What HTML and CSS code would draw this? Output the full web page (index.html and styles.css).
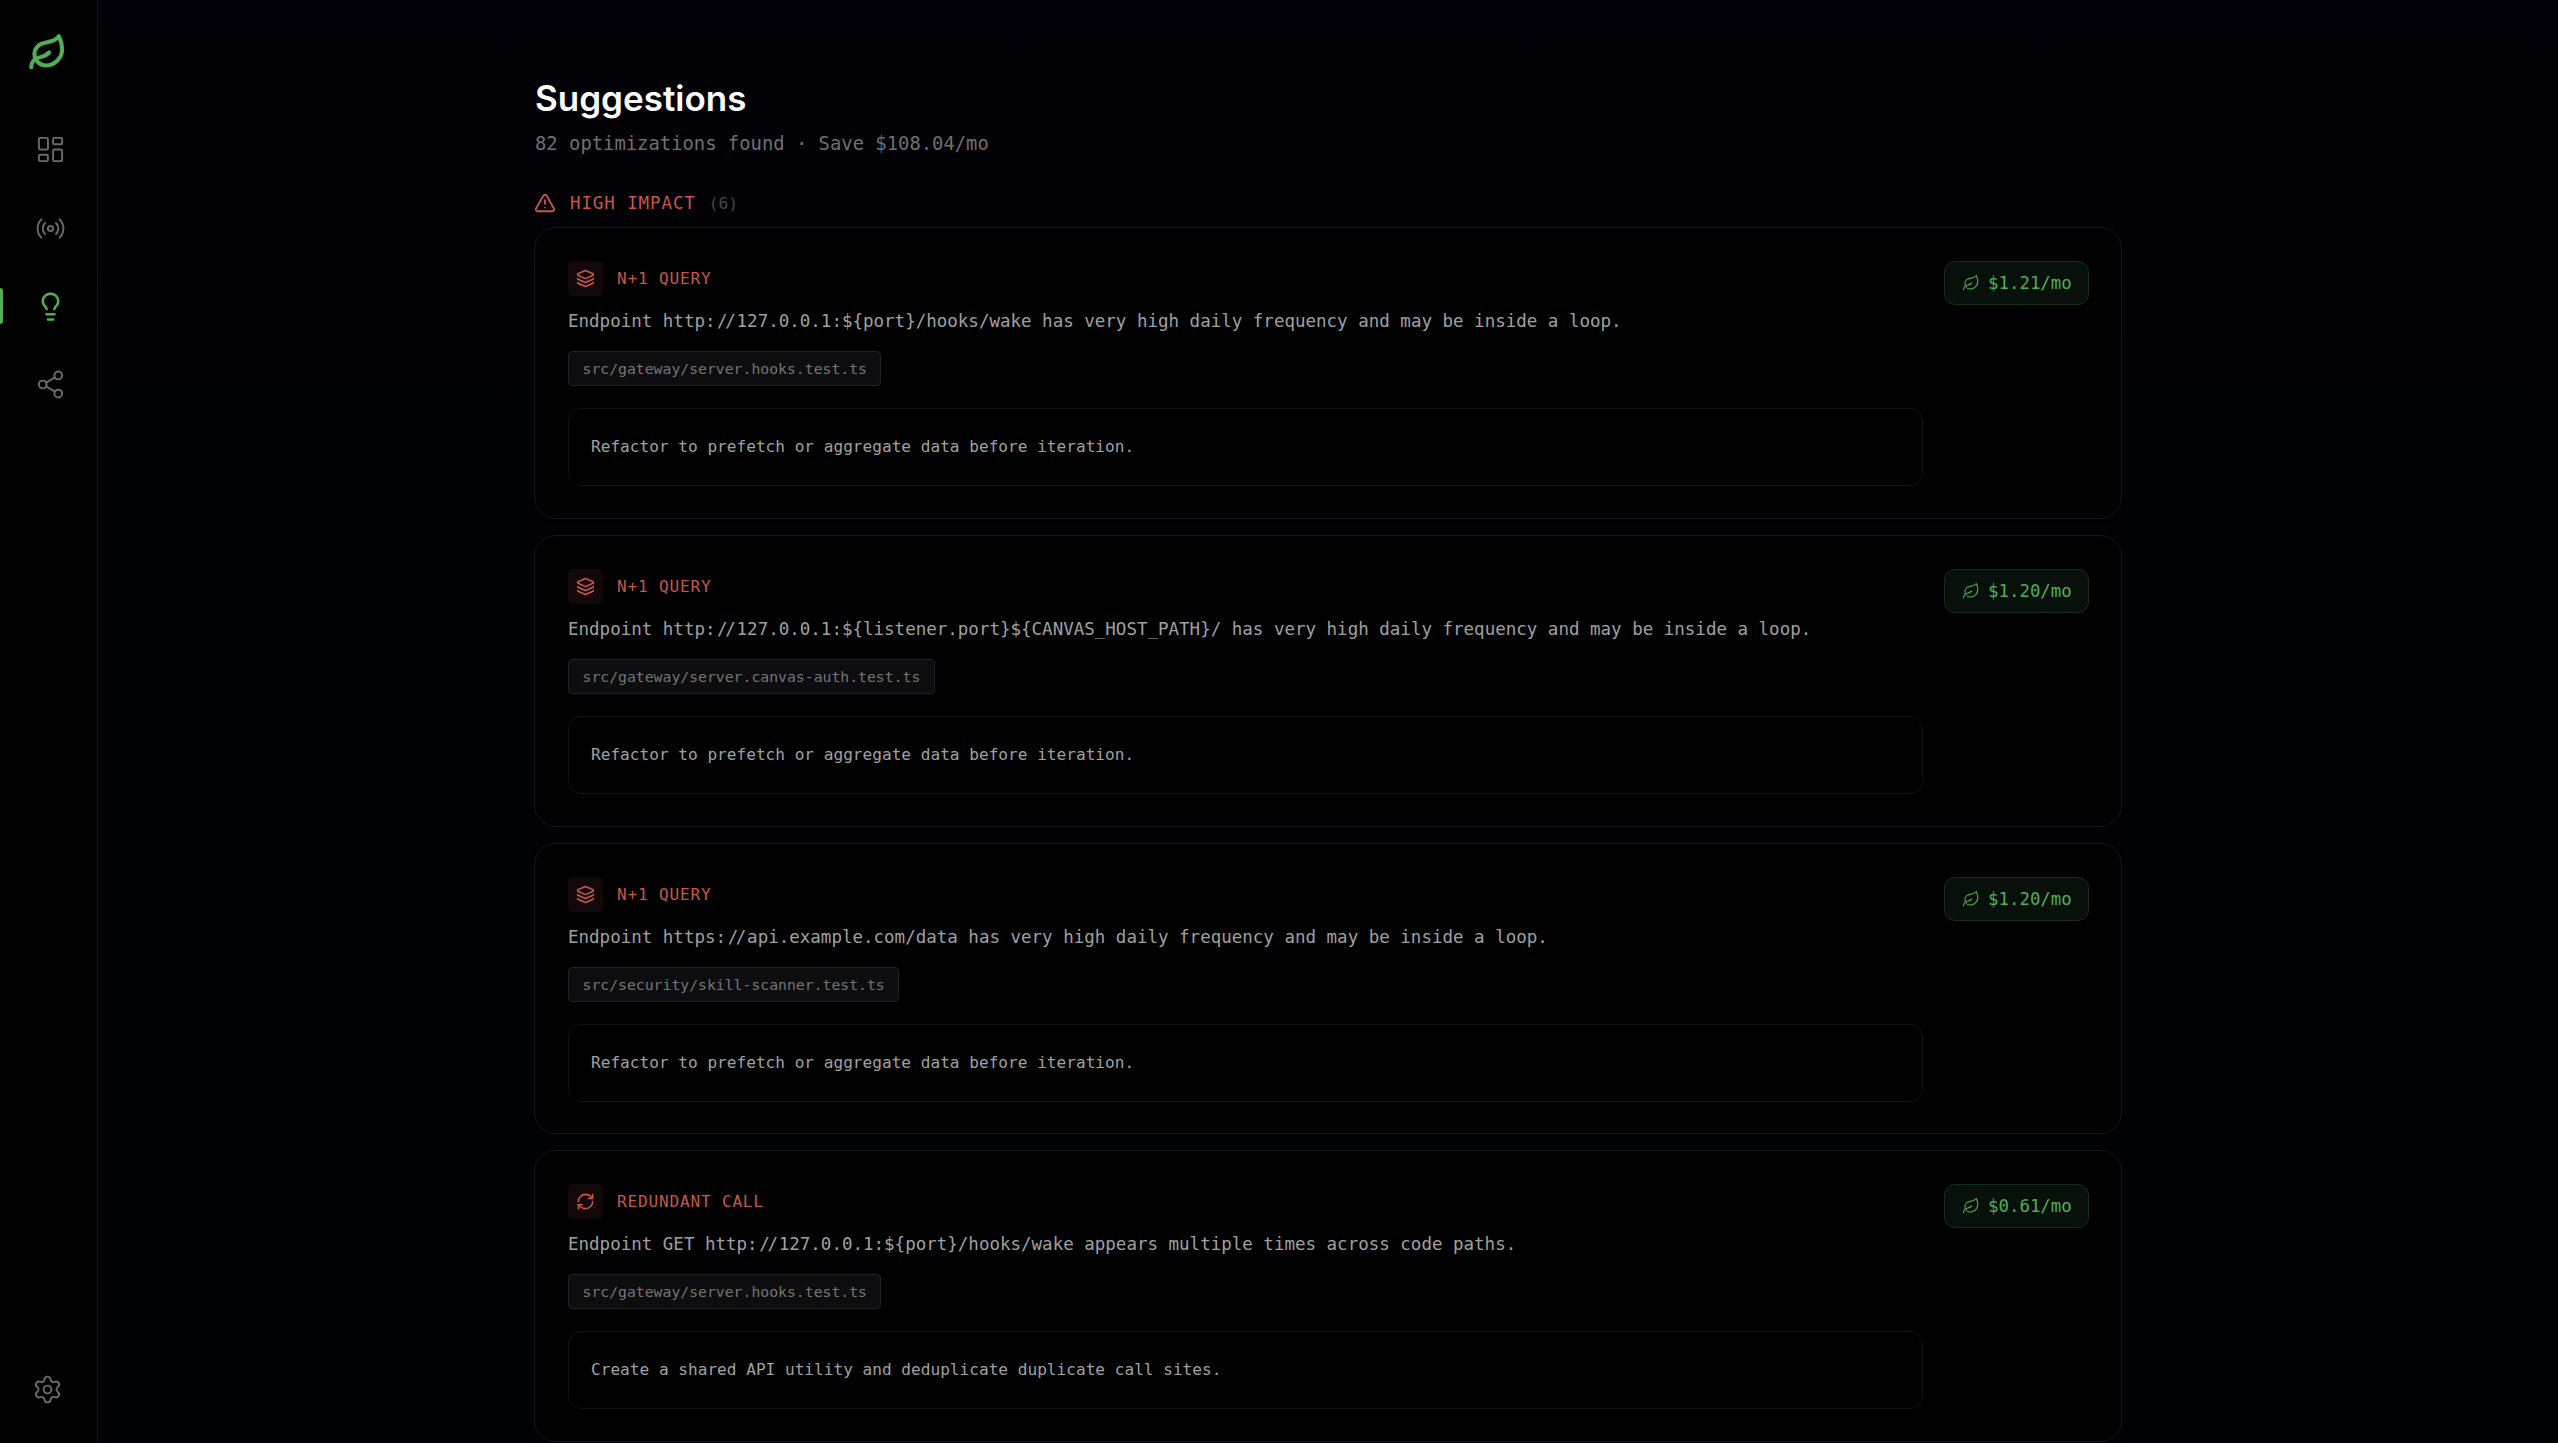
FILE: index.html
```html
<!DOCTYPE html>
<html lang="en">
<head>
<meta charset="utf-8">
<title>Suggestions</title>
<link rel="stylesheet" href="styles.css">
</head>
<body>
<svg class="sprite" aria-hidden="true">
  <symbol id="leaf" viewBox="0 0 24 24"><path d="M11 20A7 7 0 0 1 9.8 6.1C15.5 5 17 4.48 19 2c1 2 2 4.18 2 8 0 5.5-4.78 10-10 10Z"/><path d="M2 21c0-3 1.85-5.36 5.08-6C9.5 14.52 12 13 13 12"/></symbol>
  <symbol id="layers" viewBox="0 0 24 24"><path d="M12.83 2.18a2 2 0 0 0-1.66 0L2.6 6.08a1 1 0 0 0 0 1.83l8.58 3.91a2 2 0 0 0 1.66 0l8.58-3.9a1 1 0 0 0 0-1.83z"/><path d="M2 12a1 1 0 0 0 .58.91l8.6 3.91a2 2 0 0 0 1.65 0l8.58-3.9A1 1 0 0 0 22 12"/><path d="M2 17a1 1 0 0 0 .58.91l8.6 3.91a2 2 0 0 0 1.65 0l8.58-3.9A1 1 0 0 0 22 17"/></symbol>
  <symbol id="refresh" viewBox="0 0 24 24"><path d="M3 12a9 9 0 0 1 9-9 9.75 9.75 0 0 1 6.74 2.74L21 8"/><path d="M21 3v5h-5"/><path d="M21 12a9 9 0 0 1-9 9 9.75 9.75 0 0 1-6.74-2.74L3 16"/><path d="M8 16H3v5"/></symbol>
</svg>
<div class="app">
  <aside class="sidebar">
    <svg class="icon logo"><use href="#leaf"/></svg>
    <nav class="nav">
      <a class="nav-item"><svg class="icon nav-icon" viewBox="0 0 24 24"><rect x="3" y="3" width="7" height="9" rx="1"/><rect x="14" y="3" width="7" height="5" rx="1"/><rect x="14" y="12" width="7" height="9" rx="1"/><rect x="3" y="16" width="7" height="5" rx="1"/></svg></a>
      <a class="nav-item"><svg class="icon nav-icon" viewBox="0 0 24 24"><path d="M16.247 7.761a6 6 0 0 1 0 8.478"/><path d="M19.075 4.933a10 10 0 0 1 0 14.134"/><path d="M4.925 19.067a10 10 0 0 1 0-14.134"/><path d="M7.753 16.239a6 6 0 0 1 0-8.478"/><circle cx="12" cy="12" r="2"/></svg></a>
      <a class="nav-item active"><svg class="icon nav-icon" viewBox="0 0 24 24"><path d="M15 14c.2-1 .7-1.7 1.5-2.5 1-.9 1.5-2.2 1.5-3.5A6 6 0 0 0 6 8c0 1 .2 2.2 1.5 3.5.7.7 1.3 1.5 1.5 2.5"/><path d="M9 18h6"/><path d="M10 22h4"/></svg></a>
      <a class="nav-item"><svg class="icon nav-icon" viewBox="0 0 24 24"><circle cx="18" cy="5" r="3"/><circle cx="6" cy="12" r="3"/><circle cx="18" cy="19" r="3"/><path d="M8.59 13.51l6.83 3.98"/><path d="M15.41 6.51l-6.82 3.98"/></svg></a>
    </nav>
    <svg class="icon settings" viewBox="0 0 24 24"><path d="M9.671 4.136a2.34 2.34 0 0 1 4.659 0 2.34 2.34 0 0 0 3.319 1.915 2.34 2.34 0 0 1 2.33 4.033 2.34 2.34 0 0 0 0 3.831 2.34 2.34 0 0 1-2.33 4.033 2.34 2.34 0 0 0-3.319 1.915 2.34 2.34 0 0 1-4.659 0 2.34 2.34 0 0 0-3.32-1.915 2.34 2.34 0 0 1-2.33-4.033 2.34 2.34 0 0 0 0-3.831A2.34 2.34 0 0 1 6.35 6.051a2.34 2.34 0 0 0 3.319-1.915"/><circle cx="12" cy="12" r="3"/></svg>
  </aside>
  <main class="main">
    <h1 class="title">Suggestions</h1>
    <p class="subtitle">82 optimizations found · Save $108.04/mo</p>
    <div class="group-head">
      <svg class="icon group-icon" viewBox="0 0 24 24"><path d="m21.73 18-8-14a2 2 0 0 0-3.48 0l-8 14A2 2 0 0 0 4 21h16a2 2 0 0 0 1.73-3"/><path d="M12 9v4"/><path d="M12 17h.01"/></svg>
      <span class="group-name">HIGH IMPACT</span>
      <span class="group-count">(6)</span>
    </div>
    <div class="cards">
      <article class="card">
        <div class="body">
          <div class="kind"><span class="kind-box"><svg class="icon kind-icon"><use href="#layers"/></svg></span><span class="kind-name">N+1 QUERY</span></div>
          <p class="desc">Endpoint http:<span class="slashes">//</span>127.0.0.1:${port}/hooks/wake has very high daily frequency and may be inside a loop.</p>
          <span class="file">src/gateway/server.hooks.test.ts</span>
          <div class="fix">Refactor to prefetch or aggregate data before iteration.</div>
        </div>
        <div class="saving"><svg class="icon saving-icon"><use href="#leaf"/></svg><span>$1.21/mo</span></div>
      </article>
      <article class="card">
        <div class="body">
          <div class="kind"><span class="kind-box"><svg class="icon kind-icon"><use href="#layers"/></svg></span><span class="kind-name">N+1 QUERY</span></div>
          <p class="desc">Endpoint http:<span class="slashes">//</span>127.0.0.1:${listener.port}${CANVAS_HOST_PATH}/ has very high daily frequency and may be inside a loop.</p>
          <span class="file">src/gateway/server.canvas-auth.test.ts</span>
          <div class="fix">Refactor to prefetch or aggregate data before iteration.</div>
        </div>
        <div class="saving"><svg class="icon saving-icon"><use href="#leaf"/></svg><span>$1.20/mo</span></div>
      </article>
      <article class="card">
        <div class="body">
          <div class="kind"><span class="kind-box"><svg class="icon kind-icon"><use href="#layers"/></svg></span><span class="kind-name">N+1 QUERY</span></div>
          <p class="desc">Endpoint https:<span class="slashes">//</span>api.example.com/data has very high daily frequency and may be inside a loop.</p>
          <span class="file">src/security/skill-scanner.test.ts</span>
          <div class="fix">Refactor to prefetch or aggregate data before iteration.</div>
        </div>
        <div class="saving"><svg class="icon saving-icon"><use href="#leaf"/></svg><span>$1.20/mo</span></div>
      </article>
      <article class="card">
        <div class="body">
          <div class="kind"><span class="kind-box"><svg class="icon kind-icon"><use href="#refresh"/></svg></span><span class="kind-name">REDUNDANT CALL</span></div>
          <p class="desc">Endpoint GET http:<span class="slashes">//</span>127.0.0.1:${port}/hooks/wake appears multiple times across code paths.</p>
          <span class="file">src/gateway/server.hooks.test.ts</span>
          <div class="fix">Create a shared API utility and deduplicate duplicate call sites.</div>
        </div>
        <div class="saving"><svg class="icon saving-icon"><use href="#leaf"/></svg><span>$0.61/mo</span></div>
      </article>
    </div>
  </main>
</div>
</body>
</html>
```
FILE: styles.css
```css
* { box-sizing: border-box; }

body {
  margin: 0;
  color: #a0a0a0;
  font-family: "DejaVu Sans Mono", "Liberation Mono", monospace;
  background: linear-gradient(180deg, #020107 0%, #010105 25%, #000104 50%, #000105 100%);
}

h1, p { margin: 0; }

.sprite { display: none; }

.icon {
  display: block;
  flex: none;
  fill: none;
  stroke: currentColor;
  stroke-width: 1.5;
  stroke-linecap: round;
  stroke-linejoin: round;
}

.app {
  display: flex;
  height: 1443px;
  overflow: hidden;
}

.sidebar {
  display: flex;
  flex: none;
  flex-direction: column;
  width: 98px;
  padding: 33px 0 38px;
  background: #000;
  border-right: 1px solid #161618;
}

.logo {
  width: 39px;
  height: 39px;
  margin-left: 28px;
  color: #50ae56;
  stroke-width: 2.5;
}

.nav {
  display: flex;
  flex: 1;
  flex-direction: column;
  gap: 25.3px;
  margin-top: 51.4px;
}

.nav-item {
  position: relative;
  display: flex;
  align-items: center;
  height: 53px;
  padding-left: 35px;
  color: #6c6a6a;
}

.nav-item.active { color: #50ae56; }

.nav-item.active .nav-icon { stroke-width: 2; }

.nav-item.active::before {
  position: absolute;
  top: 8px;
  left: 0;
  width: 3px;
  height: 36px;
  background: #50ae56;
  border-radius: 0 3px 3px 0;
  content: "";
}

.nav-icon, .settings { width: 31px; height: 31px; }

.settings { margin-left: 32px; color: #6c6a6a; }

.main {
  flex: none;
  width: 1588px;
  margin-left: 436px;
  padding-top: 76px;
}

.title {
  margin-left: 1px;
  color: #fff;
  font: 600 35px/44px Inter, sans-serif;
}

.subtitle {
  margin: 11px 0 0 1px;
  color: #6f6f71;
  font-size: 18.85px;
  line-height: 26px;
}

.group-head {
  display: flex;
  align-items: center;
  height: 24px;
  margin-top: 34px;
}

.group-icon {
  width: 22px;
  height: 22px;
  margin-right: 14px;
  color: #c8574a;
  stroke-width: 2;
}

.group-name { color: #c8574a; font-size: 17.5px; letter-spacing: 0.9px; }

.group-count { margin-left: 13px; color: #48484a; font-size: 16.2px; }

.cards {
  display: flex;
  flex-direction: column;
  gap: 16px;
  margin-top: 12px;
}

.card {
  display: flex;
  flex: none;
  gap: 21px;
  height: 291.8px;
  padding: 33px 32px 32px 33px;
  background: #000001;
  border: 1px solid #171718;
  border-radius: 22px;
}

.body { flex: 1; }

.kind {
  display: flex;
  gap: 14px;
  align-items: center;
}

.kind-box {
  display: grid;
  width: 35px;
  height: 35px;
  background: #130809;
  border-radius: 5px;
  place-items: center;
}

.kind-icon {
  width: 19px;
  height: 19px;
  color: #c8574a;
  stroke-width: 2;
}

.kind-name { color: #c8574a; font-size: 16.1px; letter-spacing: 0.8px; }

.desc {
  margin: 11px 0 16px;
  font-size: 17.5px;
  line-height: 28px;
  white-space: nowrap;
}

/* Tightens the "//" of a URL while keeping its two-column width. */
.slashes { margin: 0 3.2px 0 1.6px; letter-spacing: -2.4px; }

.file {
  display: block;
  width: max-content;
  height: 35px;
  padding: 0 13.5px;
  color: #757577;
  font-size: 14.78px;
  line-height: 34px;
  background: #0d0d0f;
  border: 1px solid #212123;
  border-radius: 4px;
}

.fix {
  height: 78px;
  margin-top: 22px;
  padding: 0 22px;
  font-size: 16.12px;
  line-height: 76px;
  background: #000;
  border: 1px solid #121212;
  border-radius: 13px;
}

.saving {
  display: flex;
  gap: 8px;
  align-items: center;
  width: 145px;
  height: 44px;
  padding-left: 17px;
  color: #50ae56;
  font-size: 17.4px;
  background: #08100b;
  border: 1px solid #162e1b;
  border-radius: 11px;
}

.saving-icon { width: 18px; height: 18px; }
```
